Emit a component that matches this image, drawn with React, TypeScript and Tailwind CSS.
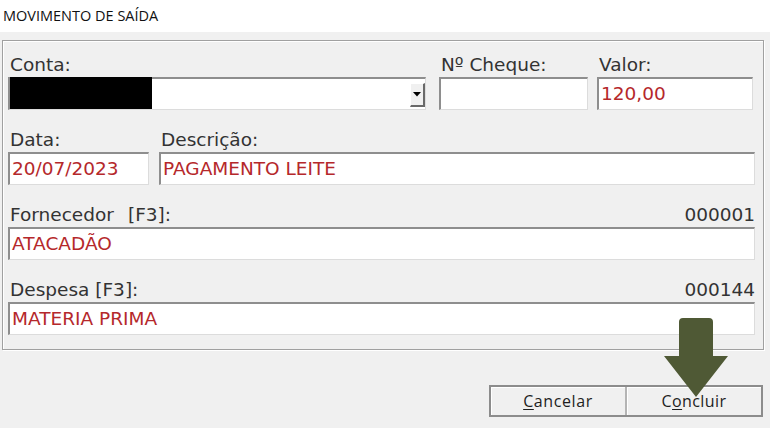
import React from "react";

const label = "h-[20px] leading-[20px] pl-[2px] text-[18.5px] text-[#333] whitespace-nowrap";
const input =
  "h-[33px] bg-white border-t-2 border-l-2 border-r border-b border-t-[#8e8e8e] border-l-[#8e8e8e] border-r-[#dcdcdc] border-b-[#dcdcdc] text-[18.5px] leading-[29px] pl-[2px] text-[#b5282b] whitespace-nowrap overflow-hidden";

export default function App() {
  return (
    <div
      className="relative w-[770px] h-[428px] bg-[#f0f0f0] overflow-hidden"
      style={{ fontFamily: '"DejaVu Sans", Verdana, sans-serif' }}
    >
      <div
        className="h-[32px] bg-white pl-[3px] pt-[6px] text-[14.5px] leading-[19px] text-[#111]"
        style={{ fontFamily: '"Open Sans", "Noto Sans", sans-serif' }}
      >
        MOVIMENTO DE SAÍDA
      </div>

      <div className="mt-[8px] ml-[2px] w-[762px] border border-[#a0a0a0] shadow-[inset_1px_1px_0_#fff,1px_1px_0_#fff] pt-[14px] pb-[14px] pl-[5px] pr-[8px] flex flex-col gap-[20px]">
        {/* Row 1 */}
        <div className="flex">
          <div className="flex flex-col gap-[2px] w-[418px]">
            <div className={label}>Conta:</div>
            <div className="relative h-[33px] bg-white border-t-2 border-l-2 border-r border-b border-t-[#8e8e8e] border-l-[#8e8e8e] border-r-[#dcdcdc] border-b-[#dcdcdc]">
              <div className="absolute left-[0px] top-[-2px] w-[142px] h-[32px] bg-black" />
              <div className="absolute right-[0px] top-[4px] w-[15px] h-[24px] bg-[#f0f0f0] border-t border-l border-t-[#fff] border-l-[#fff] border-r-2 border-b-2 border-r-[#696969] border-b-[#696969] flex items-center justify-center">
                <svg width="8" height="5" viewBox="0 0 8 5">
                  <path d="M0 0H8L4 4.5Z" fill="#000" />
                </svg>
              </div>
            </div>
          </div>
          <div className="flex flex-col gap-[2px] w-[149px] ml-[13px]">
            <div className={label}>Nº Cheque:</div>
            <div className={input}></div>
          </div>
          <div className="flex flex-col gap-[2px] w-[156px] ml-[9px]">
            <div className={label}>Valor:</div>
            <div className={input}>120,00</div>
          </div>
        </div>

        {/* Row 2 */}
        <div className="flex">
          <div className="flex flex-col gap-[2px] w-[141px]">
            <div className={label}>Data:</div>
            <div className={input}>20/07/2023</div>
          </div>
          <div className="flex flex-col gap-[2px] flex-1 ml-[10px]">
            <div className={label}>Descrição:</div>
            <div className={input}>PAGAMENTO LEITE</div>
          </div>
        </div>

        {/* Row 3 */}
        <div className="flex flex-col gap-[2px]">
          <div className="flex justify-between">
            <div className={label}>
              Fornecedor<span className="ml-[14px]">[F3]:</span>
            </div>
            <div className={label}>000001</div>
          </div>
          <div className={input}>ATACADÃO</div>
        </div>

        {/* Row 4 */}
        <div className="flex flex-col gap-[2px]">
          <div className="flex justify-between">
            <div className={label}>Despesa [F3]:</div>
            <div className={label}>000144</div>
          </div>
          <div className={input}>MATERIA PRIMA</div>
        </div>
      </div>

      <div className="flex justify-end pr-[7px] mt-[35px]">
        <div
          className="flex h-[32px] border-2 border-[#8c8c8c] text-[16px] text-[#1e1e1e]"
          style={{ fontFamily: '"Open Sans", "Noto Sans", sans-serif' }}
        >
          <div className="w-[134px] flex items-center justify-center bg-[#f0f0f0] shadow-[inset_1px_1px_0_#fff] tracking-[0.6px]">
            <span className="underline underline-offset-2">C</span>ancelar
          </div>
          <div className="w-[2px] bg-[#b4b4b4]" />
          <div className="w-[134px] flex items-center justify-center bg-[#f0f0f0] shadow-[inset_1px_1px_0_#fff] tracking-[0.4px]">
            C<span className="underline underline-offset-2">o</span>ncluir
          </div>
        </div>
      </div>

      <svg
        className="absolute left-[664px] top-[318px]"
        width="64"
        height="80"
        viewBox="0 0 64 80"
      >
        <path
          d="M15 4 A4 4 0 0 1 19 0 H45 A4 4 0 0 1 49 4 V38 H64 L32 79 L0 38 H15 Z"
          fill="#4f5935"
        />
      </svg>
    </div>
  );
}
